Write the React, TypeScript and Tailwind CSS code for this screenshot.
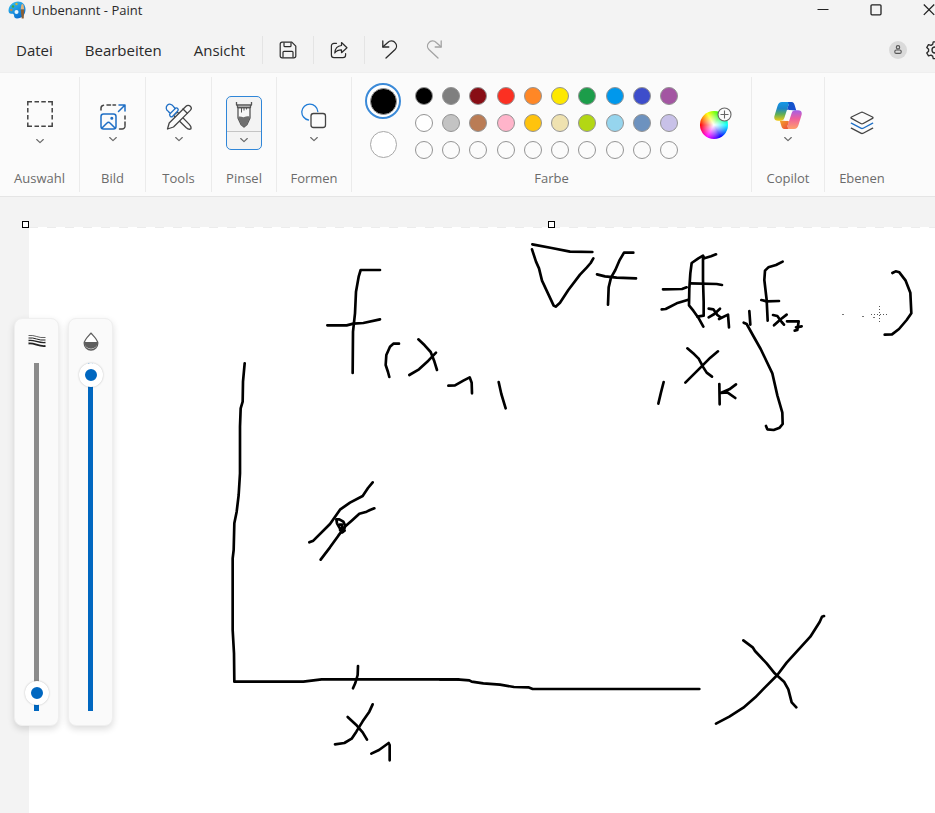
import { useState } from "react";
import type { ReactNode } from "react";

const PALETTE = [
  ["#000000", "#7f7f7f", "#880d15", "#fb3022", "#ff8726", "#fee800", "#1c9d4a", "#0098ec", "#3d4dcb", "#a355a2"],
  ["#ffffff", "#c3c3c3", "#ba7c55", "#ffb4ca", "#ffc30d", "#efe2b0", "#b3d714", "#96d5ee", "#6d92bf", "#c8c1e8"],
  ["", "", "", "", "", "", "", "", "", ""],
];

function Chevron() {
  return (
    <svg width="10" height="8" viewBox="0 0 10 8" fill="none" stroke="#666" strokeWidth="1.1" strokeLinecap="round" strokeLinejoin="round">
      <path d="M1.7 2.5 5 5.6 8.3 2.5" />
    </svg>
  );
}

function PaintLogo() {
  return (
    <svg width="18" height="18" viewBox="0 0 18 18">
      <defs>
        <linearGradient id="logo" x1="0" y1="0" x2="0.6" y2="1">
          <stop offset="0" stopColor="#35c3f3" />
          <stop offset="1" stopColor="#0a6fd0" />
        </linearGradient>
      </defs>
      <path d="M10 .5C5 .5.5 4.500.5 9.500c0 2.500 1.500 3.500 3 3.200 1.500-.3 2.500.3 2.500 1.800 0 2 1.200 3 3 3 5 0 8.500-4 8.500-9S14.500.5 10 .5Z" fill="url(#logo)" />
      <circle cx="5" cy="5.500" r="1.200" fill="#3ba745" />
      <circle cx="8.500" cy="3" r="1.200" fill="#c9b33a" />
      <circle cx="3.300" cy="9" r="1.200" fill="#b98a4e" />
      <circle cx="8.500" cy="11" r="2" fill="#e8f5fd" />
      <path d="M13.300 4c.8-1.200 1.500-1.200 2.200 0l.7 4.500h-3.500Z" fill="#e0b27c" />
      <path d="M12.700 8.500h3.500l-.5 9h-2Z" fill="#8a5f35" />
    </svg>
  );
}

function SaveIcon() {
  return (
    <svg width="18" height="18" viewBox="0 0 18 18" fill="none" stroke="#2b2b2b" strokeWidth="1.2" strokeLinejoin="round">
      <path d="M3 1.200h9.800l4 4V15a1.800 1.800 0 0 1-1.800 1.800H3A1.800 1.800 0 0 1 1.200 15V3A1.800 1.800 0 0 1 3 1.200Z" />
      <path d="M5 1.500v3.200a1 1 0 0 0 1 1h5a1 1 0 0 0 1-1V1.500M4 16.500v-5.200a1 1 0 0 1 1-1h8a1 1 0 0 1 1 1v5.200" />
    </svg>
  );
}

function ShareIcon() {
  return (
    <svg width="18" height="18" viewBox="0 0 18 18" fill="none" stroke="#2b2b2b" strokeWidth="1.200" strokeLinejoin="round" strokeLinecap="round">
      <path d="M6.500 2.300H4A2.600 2.600 0 0 0 1.400 5v9A2.600 2.600 0 0 0 4 16.600h9a2.600 2.600 0 0 0 2.600-2.600v-1.500" />
      <path d="M11.500 1.500 17 6.700l-5.500 5V8.900c-3 0-5.200 1-6.700 3.100.2-4 2.500-7.100 6.700-7.500Z" />
    </svg>
  );
}

function UndoIcon({ color, flip }: { color: string; flip?: boolean }) {
  return (
    <svg width="18" height="20" viewBox="0 0 18 20" fill="none" stroke={color} strokeWidth="1.300" strokeLinecap="round" strokeLinejoin="round">
      <g transform={flip ? "translate(18 0) scale(-1 1)" : undefined}>
        <path d="M1.800 1v6h6" />
        <path d="M2 6.800 6.800 2.500a5 5 0 0 1 7.500.3 5 5 0 0 1-.2 6.700L5 18" />
      </g>
    </svg>
  );
}

function GearIcon() {
  return (
    <svg width="20" height="20" viewBox="0 0 24 24" fill="none" stroke="#2b2b2b" strokeWidth="1.600" strokeLinejoin="round">
      <path d="M9.900 2.200h4.200l.7 3 2 1.200 3-.9 2.100 3.600-2.200 2.100v2.200l2.200 2.100-2.100 3.600-3-.9-2 1.200-.7 3H9.900l-.7-3-2-1.200-3 .9-2.100-3.600 2.200-2.100v-2.200L2.100 9.100l2.100-3.600 3 .9 2-1.200Z" />
      <circle cx="12" cy="12" r="3.600" />
    </svg>
  );
}

function SelectIcon() {
  return (
    <svg width="26" height="26" viewBox="0 0 26 26" fill="none" stroke="#444" strokeWidth="1.500">
      <path d="M.8 4.500V.8H5M21 .8h4.200v3.700M25.200 21.500v3.700H21M5 25.200H.8v-3.700M7.500.8h4.500M14.300.8h4.500M7.500 25.200h4.500M14.300 25.200h4.500M.8 7v4.500M.8 14v4.500M25.200 7v4.500M25.200 14v4.500" />
    </svg>
  );
}

function ImageIcon() {
  return (
    <svg width="28" height="28" viewBox="0 0 28 28" fill="none" strokeWidth="1.500" strokeLinecap="round" strokeLinejoin="round">
      <path stroke="#444" d="M2 7V5a3 3 0 0 1 2.500-2.700M8 2h3.500M14 2h2.500M26 13v3M26 19v3.500M20.500 26H23a3 3 0 0 0 3-2.500" />
      <g stroke="#1f6fc5">
        <path d="M19.500 8.500 26 2M20 2h6v6" />
        <rect x="2" y="11" width="15" height="15" rx="2.500" />
        <path d="M3 25l5-5a2 2 0 0 1 3 0l5 5" />
        <circle cx="12.800" cy="15.200" r=".8" fill="#1f6fc5" />
      </g>
    </svg>
  );
}

function ToolsIcon() {
  return (
    <svg width="28" height="28" viewBox="0 0 28 28" strokeWidth="1.300" strokeLinejoin="round" strokeLinecap="round">
      <g fill="#fbfbfb" stroke="#444">
        <path d="m8.500 12.200 12.500 12.300c1 .9 3.500 2 4.800 1.500.6-1.200-.6-3.600-1.500-4.600L12.300 9Z" />
        <path d="M21 3.200a3 3 0 0 1 4.300 0 3 3 0 0 1 0 4.200L8.500 24l-6 2 1.700-6Z" />
        <path d="m18 6 4.300 4.300" />
      </g>
      <g fill="#fbfbfb" stroke="#1f6fc5">
        <path d="M3.200 8.200a3.700 3.700 0 1 1 5-5L10 5.500c1-.8 2-.8 2.700 0s.8 1.700 0 2.500l-5 5.200c-.8.8-1.700.8-2.500 0s-.8-1.800 0-2.700Z" />
        <path d="m5.500 10.300 4.700-4.700" />
      </g>
    </svg>
  );
}

function BrushIcon() {
  return (
    <svg width="18" height="28" viewBox="0 0 18 28" fill="none" stroke="#555" strokeWidth="1.300" strokeLinejoin="round">
      <path d="M1.500 1v3h15V1" />
      <path d="M3 6.500h12V17l-3 6.500L9 26l-3-2.500L3 17Z" fill="#f8f8f8" />
      <path d="M3.300 16c2-1.300 4 .8 6 0s4-1 5.400-.2V17L12 23.500 9 26l-3-2.500L3.300 17Z" fill="#707070" stroke="none" />
      <path d="M2.500 4v2.500h13V4" />
      <path d="M6.500 7v4.500M9 7v2.500M11.500 7v1.500" strokeWidth="1" />
    </svg>
  );
}

function ShapesIcon() {
  return (
    <svg width="26" height="26" viewBox="0 0 26 26" fill="none" strokeWidth="1.300">
      <path stroke="#1f7bd6" strokeLinecap="round" d="M7.500 17A8 8 0 1 1 16.800 8.500" />
      <rect x="10" y="10.500" width="14.500" height="14" rx="2.500" stroke="#444" />
    </svg>
  );
}

function CopilotIcon() {
  return (
    <svg width="28" height="27" viewBox="0 0 28 27">
      <defs>
        <linearGradient id="cpLeft" x1="0" y1="0" x2="0" y2="1">
          <stop offset="0" stopColor="#1598e8" />
          <stop offset=".35" stopColor="#1c86c8" />
          <stop offset=".65" stopColor="#5fae56" />
          <stop offset="1" stopColor="#f3cb16" />
        </linearGradient>
        <linearGradient id="cpRight" x1="0" y1="0" x2="0" y2="1">
          <stop offset="0" stopColor="#a45fe8" />
          <stop offset=".45" stopColor="#ee5f9c" />
          <stop offset="1" stopColor="#ffa06a" />
        </linearGradient>
        <linearGradient id="cpTop" x1="0" y1="0" x2="1" y2="1">
          <stop offset="0" stopColor="#0b58c8" />
          <stop offset="1" stopColor="#1c4bd0" />
        </linearGradient>
        <linearGradient id="cpBottom" x1="0" y1="0" x2="1" y2="1">
          <stop offset="0" stopColor="#f5a52a" />
          <stop offset="1" stopColor="#e8483a" />
        </linearGradient>
      </defs>
      <path d="M8 0h9.500C15.500.2 15 1.500 14.200 4l-3.700 11.500c-.7 2.300-1.700 3.300-4 3.300H4C1 18.800-.5 17 .6 13.500L3.500 4C4.400 1.200 5.500 0 8 0Z" fill="url(#cpLeft)" />
      <path d="M20 27h-9.500c2-.2 2.500-1.500 3.300-4l3.700-11.500c.7-2.300 1.700-3.300 4-3.300H24c3 0 4.500 1.800 3.400 5.300L24.500 23c-.9 2.800-2 4-4.500 4Z" fill="url(#cpRight)" />
      <path d="M14 0h3.500c2 0 2.700 1.500 3.200 3.200l1.500 5h-4.500c-2 0-3.500 0-4.700-.7l1.700-5Z" fill="url(#cpTop)" />
      <path d="M14 27h-3.500c-2 0-2.700-1.500-3.200-3.200l-1.500-5h4.500c2 0 3.500 0 4.700.7l-1.700 5Z" fill="url(#cpBottom)" />
      <path d="M15.500 8.300h2.300l-.5 1.500-2.300 7c-.5 1.500-1.200 2-2.500 2h-2.300l.5-1.500 2.300-7c.5-1.500 1.200-2 2.500-2Z" fill="#fbfbfb" />
    </svg>
  );
}

function LayersIcon() {
  return (
    <svg width="24" height="24" viewBox="0 0 24 24" fill="none" strokeWidth="1.300" strokeLinejoin="round" strokeLinecap="round">
      <path stroke="#444" d="M10.800 1.500a2.500 2.500 0 0 1 2.400 0L22.500 6c.7.400.7 1 0 1.400L13.200 12.500a2.500 2.500 0 0 1-2.400 0L1.500 7.400c-.7-.4-.7-1 0-1.400Z" />
      <path stroke="#1f6fc5" d="m1.300 12.200 9.500 5a2.500 2.500 0 0 0 2.400 0l9.500-5" />
      <path stroke="#444" d="m1.300 17.200 9.500 5a2.500 2.500 0 0 0 2.400 0l9.500-5" />
    </svg>
  );
}

function Group({ label, width, last, children }: { label: string; width: string; last?: boolean; children: ReactNode }) {
  return (
    <section aria-label={label} className={`flex shrink-0 flex-col items-center ${width} ${last ? "" : "border-r border-[#ebebeb]"}`}>
      <div className="flex flex-1 items-center justify-center">{children}</div>
      <h2 className="pb-1 text-[13px] leading-5 text-[#6b6b6b]">{label}</h2>
    </section>
  );
}

function MenuIcon({ label, width, children }: { label: string; width: string; children: ReactNode }) {
  return (
    <button aria-label={label} className={`flex h-9 items-center justify-center ${width}`}>
      {children}
    </button>
  );
}

function MenuRule() {
  return <span className="h-7 w-px bg-[#e4e4e4]" />;
}

function LevelSlider({ label, start, icon }: { label: string; start: number; icon: ReactNode }) {
  const [value, setValue] = useState(start);
  return (
    <label className="flex w-[45px] flex-col items-center gap-3 rounded-lg border border-[#efefef] bg-[#fafafa] pt-3 pb-[14px] shadow-[0_3px_7px_rgba(0,0,0,0.14)]">
      <span className="flex h-5 items-center">{icon}</span>
      <input
        type="range"
        aria-label={label}
        min={0}
        max={100}
        value={value}
        onChange={(e) => setValue(Number(e.target.value))}
        style={{ backgroundImage: `linear-gradient(to top, #0067c0 ${value}%, #8b8b8b ${value}%)` }}
        className="h-[348px] w-6 appearance-none bg-[length:5px_100%] bg-center bg-no-repeat [direction:rtl] [writing-mode:vertical-lr] [&::-webkit-slider-thumb]:h-6 [&::-webkit-slider-thumb]:w-6 [&::-webkit-slider-thumb]:appearance-none [&::-webkit-slider-thumb]:rounded-full [&::-webkit-slider-thumb]:border-[6px] [&::-webkit-slider-thumb]:border-white [&::-webkit-slider-thumb]:bg-[#0067c0] [&::-webkit-slider-thumb]:shadow-[0_0_2px_rgba(0,0,0,0.25)]"
      />
    </label>
  );
}

function Handle({ place }: { place: string }) {
  return <span className={`absolute -top-1.5 size-[7px] border border-black bg-white ${place}`} />;
}

/* Freehand strokes, stored at three units per canvas pixel. */
const STROKES: { x: number; y: number; lines: string[] }[] = [
  {
    x: 491,
    y: 3,
    lines: [
      "37,43 95,54 150,65 217,66",
      "36,58 48,95 57,115 66,152 80,182 101,227 107,230 120,218 145,180 180,134 200,113 212,99 220,85",
      "340,68 312,68 298,92 286,120 273,143 266,172 264,224",
      "231,133 255,139 290,143 348,145",
      "429,178 486,177 500,172",
      "425,238 437,237 470,220 505,209",
      "588,73 573,79 553,85 549,77 535,85 515,99 511,130 508,175 507,226 520,242 535,263 550,290",
      "549,82 549,150 551,215 551,257 532,260",
      "511,160 590,162 606,165",
      "566,236 580,238 592,255 602,262",
      "600,236 583,252 566,262",
      "597,267 624,254 627,292",
      "788,95 768,105 745,112 735,122 733,150 740,210 743,272",
      "724,210 740,214 777,213",
      "759,255 772,258 785,276 792,284",
      "800,254 783,267 762,286",
      "801,274 836,274 832,300 824,302",
      "828,292 845,289",
      "688,243 691,284",
      "671,278 680,282 700,318 722,357 757,430 772,496 787,548 788,582 779,593 761,600 742,598 738,588",
      "1117,129 1127,124 1138,127 1157,152 1171,188 1174,250 1160,270 1137,297 1116,313 1094,314",
      "502,355 523,373 536,386 550,412 560,428 576,440",
      "594,364 571,383 536,418 496,458",
      "431,456 423,487 415,521",
      "598,462 599,523",
      "648,463 628,478 602,489 622,487 646,504",
    ],
  },
  {
    x: 271,
    y: 23,
    lines: [
      "240,60 182,60 176,80 168,125 165,190 159,245 158,369",
      "82,226 140,226 160,221 190,219 240,208",
      "297,281 280,281 270,290 259,315 257,345 264,366 268,381",
      "355,268 374,286 392,306 403,334 411,360",
      "408,308 385,332 357,358 328,375",
      "445,407 465,406 490,392 509,382 515,398 516,430",
      "596,396 604,432 617,475",
    ],
  },
  {
    x: 191,
    y: 123,
    lines: [
      "74,40 69,95 68,155 62,175 60,230 60,370 56,435 50,485 43,520 41,600 38,625 38,840 42,910 43,995 250,995 305,988 715,988",
      "268,577 280,572 330,522 360,479 390,458 428,438 444,414 458,397",
      "463,475 450,480 440,485 418,491 395,512 376,529 355,557 330,592 302,629",
      "349,508 358,508 370,515 375,526 372,540 368,546 360,536 351,520 349,508",
      "359,524 366,524 366,532 360,540 366,547 374,542",
      "414,948 413,975 406,999 399,1015",
      "383,1101 408,1124 428,1147 441,1169",
      "458,1063 448,1085 428,1114 409,1145 395,1166 373,1179 345,1183",
      "454,1211 477,1200 506,1179 509,1185 509,1231",
    ],
  },
  {
    x: 411,
    y: 373,
    lines: [
      "0,238 50,238 88,241 95,245 130,250 180,254 222,261 265,262 278,267 778,267",
      "1152,48 1146,50 1139,66 1111,110 1040,188 1012,225 975,262 946,292 910,323 868,350 828,371",
      "910,121 938,142 945,153 980,190 1004,220 1032,245 1045,268 1055,307 1069,322",
    ],
  },
];

function Sketch() {
  return (
    <svg role="img" aria-label="Zeichnung" width="1045" height="760" viewBox="0 0 1045 760" className="block max-w-none" fill="none">
      <path d="M0 .5h1045" stroke="#ececec" strokeDasharray="9 9" />
      {STROKES.map((set) => (
        <g key={`${set.x}-${set.y}`} transform={`translate(${set.x} ${set.y}) scale(${1 / 3})`} stroke="#000" strokeWidth="8" strokeLinecap="round" strokeLinejoin="round">
          {set.lines.map((points) => (
            <polyline key={points} points={points} />
          ))}
        </g>
      ))}
      <path d="M813 87.500h2M833 89.500h2M844 90.500h2" stroke="#777" />
      <path d="M850.500 79v18M842 87.500h17" stroke="#555" strokeDasharray="1 2" />
    </svg>
  );
}

export default function App() {
  const [primary, setPrimary] = useState("#000000");
  return (
    <div className="flex h-screen flex-col overflow-hidden bg-[#f3f3f3] font-['Open_Sans','Noto_Sans',sans-serif] text-[#2a2a2a]">
      <header className="flex h-[27px] shrink-0 items-center pb-[7px] pl-2">
        <PaintLogo />
        <h1 className="ml-1.5 text-[13px] leading-5">Unbenannt - Paint</h1>
        <div className="-mr-5 ml-auto flex">
          <button aria-label="Minimieren" className="flex h-5 w-[53px] items-center justify-center">
            <svg width="12" height="12" viewBox="0 0 12 12" stroke="#222" strokeWidth="1"><path d="M.5 5.500h11" /></svg>
          </button>
          <button aria-label="Maximieren" className="flex h-5 w-[53px] items-center justify-center">
            <svg width="12" height="12" viewBox="0 0 12 12" fill="none" stroke="#222" strokeWidth="1.300"><rect x="1" y=".8" width="10" height="10" rx="1" /></svg>
          </button>
          <button aria-label="Schließen" className="flex h-5 w-[53px] items-center justify-center">
            <svg width="12" height="12" viewBox="0 0 12 12" stroke="#222" strokeWidth="1.300"><path d="m.8.500 10.400 10.400M11.200.500.8 10.900" /></svg>
          </button>
        </div>
      </header>

      <nav className="flex h-[45px] shrink-0 items-center">
        <button className="px-4 text-[15px] leading-5">Datei</button>
        <button className="px-4 text-[15px] leading-5">Bearbeiten</button>
        <button className="mr-px px-4 text-[15px] leading-5">Ansicht</button>
        <MenuRule />
        <MenuIcon label="Speichern" width="w-[50px]"><SaveIcon /></MenuIcon>
        <MenuRule />
        <MenuIcon label="Teilen" width="w-[50px]"><ShareIcon /></MenuIcon>
        <MenuRule />
        <MenuIcon label="Rückgängig" width="w-[50px]"><UndoIcon color="#2b2b2b" /></MenuIcon>
        <MenuIcon label="Wiederholen" width="w-[38px]"><UndoIcon color="#a3a3a3" flip /></MenuIcon>
        <div className="-mr-3.5 ml-auto flex items-center gap-3.5">
          <button aria-label="Konto" className="flex size-[18px] items-center justify-center rounded-full bg-[#dadada]">
            <svg width="8" height="9" viewBox="0 0 8 9" fill="none" stroke="#555" strokeWidth="1.100"><circle cx="4" cy="2.300" r="1.700" /><rect x=".8" y="5" width="6.400" height="3.400" rx="1.500" /></svg>
          </button>
          <button aria-label="Einstellungen" className="flex size-7 items-center justify-center"><GearIcon /></button>
        </div>
      </nav>

      <div className="flex h-[125px] shrink-0 border-y border-t-[#efefef] border-b-[#e5e5e5] bg-[#fbfbfb] py-1">
        <Group label="Auswahl" width="w-20">
          <button aria-label="Auswahl" className="flex flex-col items-center gap-2.5"><SelectIcon /><Chevron /></button>
        </Group>
        <Group label="Bild" width="w-[66px]">
          <button aria-label="Bild" className="flex flex-col items-center gap-1"><ImageIcon /><Chevron /></button>
        </Group>
        <Group label="Tools" width="w-[66px]">
          <button aria-label="Tools" className="flex flex-col items-center gap-1"><ToolsIcon /><Chevron /></button>
        </Group>
        <Group label="Pinsel" width="w-[65px]">
          <button aria-label="Pinsel" className="flex h-[54px] w-9 flex-col items-center rounded-[5px] border border-[#2f86d8] bg-[#f3f3f3]">
            <span className="flex w-full justify-center border-b border-[#c4c4c4] pt-1 pb-0.5"><BrushIcon /></span>
            <span className="flex flex-1 items-center"><Chevron /></span>
          </button>
        </Group>
        <Group label="Formen" width="w-[75px]">
          <button aria-label="Formen" className="flex flex-col items-center gap-1.5"><ShapesIcon /><Chevron /></button>
        </Group>
        <Group label="Farbe" width="w-[400px]">
          <div className="flex items-center pr-2.5">
            <div className="mb-1 flex flex-col items-center gap-3">
              <button aria-label="Farbe 1" className="flex size-9 items-center justify-center rounded-full border-2 border-[#3b8ad8] bg-white">
                <span className="size-[27px] rounded-full border border-[#999]" style={{ backgroundColor: primary }} />
              </button>
              <button aria-label="Farbe 2" className="size-[27px] rounded-full border border-[#a8a8a8] bg-white" />
            </div>
            <div className="ml-3.5 grid w-[263px] grid-cols-[repeat(10,18px)] justify-between gap-y-[9px]">
              {PALETTE.flat().map((color, i) => (
                <button
                  key={i}
                  aria-label={color || "Leeres Farbfeld"}
                  onClick={() => color && setPrimary(color)}
                  className="size-[18px] rounded-full border border-[#949494]"
                  style={{ backgroundColor: color || "transparent" }}
                />
              ))}
            </div>
            <button aria-label="Farben bearbeiten" className="relative mt-1 ml-[22px] size-7 rounded-full bg-[radial-gradient(circle,white_0%,transparent_70%),conic-gradient(from_270deg,#f00,#ff0,#0f0,#0ff,#00f,#f0f,#f00)]">
              <svg className="absolute -top-1 -right-1" width="15" height="15" viewBox="0 0 15 15" fill="#fbfbfb" stroke="#666" strokeWidth="1.100">
                <circle cx="7.500" cy="7.500" r="6.500" />
                <path d="M7.500 3.500v8M3.500 7.500h8" />
              </svg>
            </button>
          </div>
        </Group>
        <Group label="Copilot" width="w-[73px]">
          <button aria-label="Copilot" className="flex flex-col items-center gap-1.5"><CopilotIcon /><Chevron /></button>
        </Group>
        <Group label="Ebenen" width="w-[74px]" last>
          <button aria-label="Ebenen"><LayersIcon /></button>
        </Group>
      </div>

      <main className="relative min-h-0 flex-1 overflow-hidden pt-[30px] pl-[29px]">
        <div className="relative w-[1045px] bg-white">
          <Sketch />
          <Handle place="-left-[7px]" />
          <Handle place="left-[519px]" />
        </div>
        <aside aria-label="Pinseleinstellungen" className="absolute top-[121px] left-3.5 flex gap-[9px]">
          <LevelSlider
            label="Größe"
            start={2}
            icon={
              <svg width="18" height="14" viewBox="0 0 18 14" fill="none" stroke="#222">
                <path d="M.5 1.500c6-1 10 3 17 2" strokeWidth=".7" />
                <path d="M.5 4c6-1 10 3 17 2" strokeWidth="1" />
                <path d="M.5 6.500c6-1 10 3 17 2" strokeWidth="1.300" />
                <path d="M.5 9.500c6-1 10 3.500 17 2.500" strokeWidth="1.800" />
              </svg>
            }
          />
          <LevelSlider
            label="Deckkraft"
            start={100}
            icon={
              <svg width="16" height="19" viewBox="0 0 16 19">
                <path d="M8 1.200C5 4.500 1.200 8 1.200 11.200a6.800 6.800 0 0 0 13.600 0C14.800 8 11 4.500 8 1.200Z" fill="#fff" stroke="#5e5e5e" strokeWidth="1.300" />
                <path d="M1.200 10h13.600a6.800 6.800 0 1 1-13.600 0Z" fill="#5e5e5e" />
              </svg>
            }
          />
        </aside>
      </main>
    </div>
  );
}
